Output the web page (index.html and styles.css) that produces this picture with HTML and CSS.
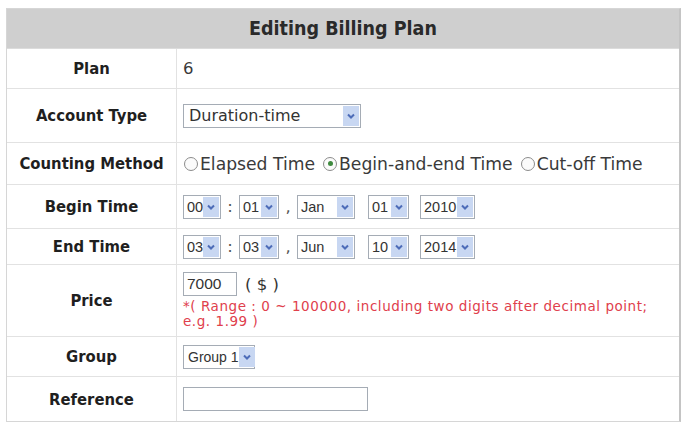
FILE: index.html
```html
<!DOCTYPE html>
<html>
<head>
<meta charset="utf-8">
<title>Editing Billing Plan</title>
<link rel="stylesheet" href="styles.css">
</head>
<body>
<div class="panel">
  <div class="title">Editing Billing Plan</div>

  <div class="row r-plan">
    <div class="label">Plan</div>
    <div class="value">6</div>
  </div>

  <div class="row r-account">
    <div class="label">Account Type</div>
    <div class="value">
      <span class="sel w-type"><span class="txt">Duration-time</span><span class="btn"><svg viewBox="0 0 10 10"><path d="M2 3.5 L5 6.5 L8 3.5" /></svg></span></span>
    </div>
  </div>

  <div class="row r-count">
    <div class="label">Counting Method</div>
    <div class="value radios">
      <span class="radio"></span><span>Elapsed Time</span>
      <span class="radio on"></span><span>Begin-and-end Time</span>
      <span class="radio"></span><span>Cut-off Time</span>
    </div>
  </div>

  <div class="row r-begin">
    <div class="label">Begin Time</div>
    <div class="value dates">
      <span class="sel narrow w-2"><span class="txt">00</span><span class="btn"><svg viewBox="0 0 10 10"><path d="M2 3.5 L5 6.5 L8 3.5" /></svg></span></span>
      <span class="sep">:</span>
      <span class="sel narrow w-2b"><span class="txt">01</span><span class="btn"><svg viewBox="0 0 10 10"><path d="M2 3.5 L5 6.5 L8 3.5" /></svg></span></span>
      <span class="sep">,</span>
      <span class="sel narrow w-mon"><span class="txt">Jan</span><span class="btn"><svg viewBox="0 0 10 10"><path d="M2 3.5 L5 6.5 L8 3.5" /></svg></span></span>
      <span class="sel narrow w-day"><span class="txt">01</span><span class="btn"><svg viewBox="0 0 10 10"><path d="M2 3.5 L5 6.5 L8 3.5" /></svg></span></span>
      <span class="sel narrow w-yr"><span class="txt">2010</span><span class="btn"><svg viewBox="0 0 10 10"><path d="M2 3.5 L5 6.5 L8 3.5" /></svg></span></span>
    </div>
  </div>

  <div class="row r-end">
    <div class="label">End Time</div>
    <div class="value dates">
      <span class="sel narrow w-2"><span class="txt">03</span><span class="btn"><svg viewBox="0 0 10 10"><path d="M2 3.5 L5 6.5 L8 3.5" /></svg></span></span>
      <span class="sep">:</span>
      <span class="sel narrow w-2b"><span class="txt">03</span><span class="btn"><svg viewBox="0 0 10 10"><path d="M2 3.5 L5 6.5 L8 3.5" /></svg></span></span>
      <span class="sep">,</span>
      <span class="sel narrow w-mon"><span class="txt">Jun</span><span class="btn"><svg viewBox="0 0 10 10"><path d="M2 3.5 L5 6.5 L8 3.5" /></svg></span></span>
      <span class="sel narrow w-day"><span class="txt">10</span><span class="btn"><svg viewBox="0 0 10 10"><path d="M2 3.5 L5 6.5 L8 3.5" /></svg></span></span>
      <span class="sel narrow w-yr"><span class="txt">2014</span><span class="btn"><svg viewBox="0 0 10 10"><path d="M2 3.5 L5 6.5 L8 3.5" /></svg></span></span>
    </div>
  </div>

  <div class="row r-price">
    <div class="label">Price</div>
    <div class="value price">
      <div class="price-line"><span class="input w-price">7000</span><span class="unit">( $ )</span></div>
      <div class="hint">*( Range : 0 ~ 100000, including two digits after decimal point; e.g. 1.99 )</div>
    </div>
  </div>

  <div class="row r-group">
    <div class="label">Group</div>
    <div class="value">
      <span class="sel narrow w-group"><span class="txt">Group 1</span><span class="btn"><svg viewBox="0 0 10 10"><path d="M2 3.5 L5 6.5 L8 3.5" /></svg></span></span>
    </div>
  </div>

  <div class="row r-ref">
    <div class="label">Reference</div>
    <div class="value">
      <span class="input w-ref"></span>
    </div>
  </div>
</div>
</body>
</html>
```
FILE: styles.css
```css
body {
  margin: 0;
  background: #ffffff;
  font-family: "DejaVu Sans Condensed", "DejaVu Sans", sans-serif;
  color: #222;
}

.panel {
  margin: 8px 6px 0 6px;
  width: 675px;
  border: 1px solid #d6d6d6;
  border-right: 2px solid #c4c4c4;
  box-sizing: border-box;
}

.title {
  height: 40px;
  background: #cfcfcf;
  display: flex;
  align-items: center;
  justify-content: center;
  font-size: 19.5px;
  font-weight: bold;
  color: #2a2a2a;
  border-bottom: 1px solid #dcdcdc;
  box-sizing: border-box;
}

.row {
  display: grid;
  grid-template-columns: 170px 1fr;
  border-bottom: 1px solid #e2e2e2;
  box-sizing: border-box;
}
.row:last-child { border-bottom: none; }

.label {
  display: flex;
  align-items: center;
  justify-content: center;
  font-weight: bold;
  font-size: 16.5px;
  color: #1f1f1f;
  border-right: 1px solid #e2e2e2;
}

.value {
  display: flex;
  align-items: center;
  padding-left: 6px;
  font-family: "DejaVu Sans", Verdana, sans-serif;
  font-size: 16.5px;
  color: #3a3a3a;
}

.r-plan { height: 40px; }
.r-account { height: 54px; }
.r-count { height: 42px; }
.r-begin { height: 44px; }
.r-end { height: 36px; }
.r-price { height: 72px; }
.r-group { height: 40px; }
.r-ref { height: 44px; }

/* drop-down boxes */
.sel {
  display: inline-flex;
  align-items: stretch;
  height: 24px;
  border: 1px solid #a5acb5;
  background: #fff;
  box-sizing: border-box;
  padding: 1px;
}
.sel .txt {
  flex: 1 0 auto;
  display: flex;
  align-items: center;
  padding-left: 4px;
  font-size: 16px;
  color: #333;
  white-space: nowrap;
}
.sel.narrow .txt {
  font-family: "Liberation Sans", Arial, sans-serif;
  font-size: 14.5px;
  padding-left: 2px;
}
.sel .btn {
  width: 16px;
  flex: none;
  background: #c8d7f2;
  display: flex;
  align-items: center;
  justify-content: center;
}
.sel .btn svg {
  width: 10px;
  height: 10px;
}
.sel .btn path {
  fill: none;
  stroke: #4d6cb8;
  stroke-width: 2;
}

.w-type { width: 178px; }
.w-2 { width: 38px; }
.w-2b { width: 40px; }
.w-mon { width: 58px; }
.w-day { width: 41px; }
.w-yr { width: 55px; }
.w-group { width: 72px; }
.sel.w-group .txt { font-size: 14px; padding-left: 3px; }

.dates .sep {
  width: 18px;
  text-align: center;
  color: #555;
}
.dates .w-day { margin-left: 13px; }
.dates .w-yr { margin-left: 11px; }

/* radio buttons */
.radios { font-size: 17.2px; }
.radios span { white-space: nowrap; }
.radio {
  width: 14px;
  height: 14px;
  border: 1px solid #8c8c8c;
  border-radius: 50%;
  box-sizing: border-box;
  margin: 0 2px 0 1px;
  display: inline-flex;
  align-items: center;
  justify-content: center;
  background: #fbfbfb;
}
.radio + span { margin-right: 7px; }
.radio.on::after {
  content: "";
  width: 5px;
  height: 5px;
  border-radius: 50%;
  background: #3f8a3f;
}

/* text inputs */
.input {
  display: inline-flex;
  align-items: center;
  height: 24px;
  border: 1px solid #a5acb5;
  box-sizing: border-box;
  padding-left: 3px;
  font-family: "Liberation Sans", Arial, sans-serif;
  font-size: 15.5px;
  color: #333;
  background: #fff;
}
.w-price { width: 54px; }
.w-ref { width: 185px; }

.price {
  flex-direction: column;
  align-items: flex-start;
  justify-content: center;
}
.price-line {
  display: flex;
  align-items: center;
}
.unit {
  margin-left: 8px;
  color: #333;
}
.hint {
  margin-top: 3px;
  font-size: 13.5px;
  letter-spacing: 0.55px;
  line-height: 15px;
  color: #e0404c;
  width: 478px;
}
```
